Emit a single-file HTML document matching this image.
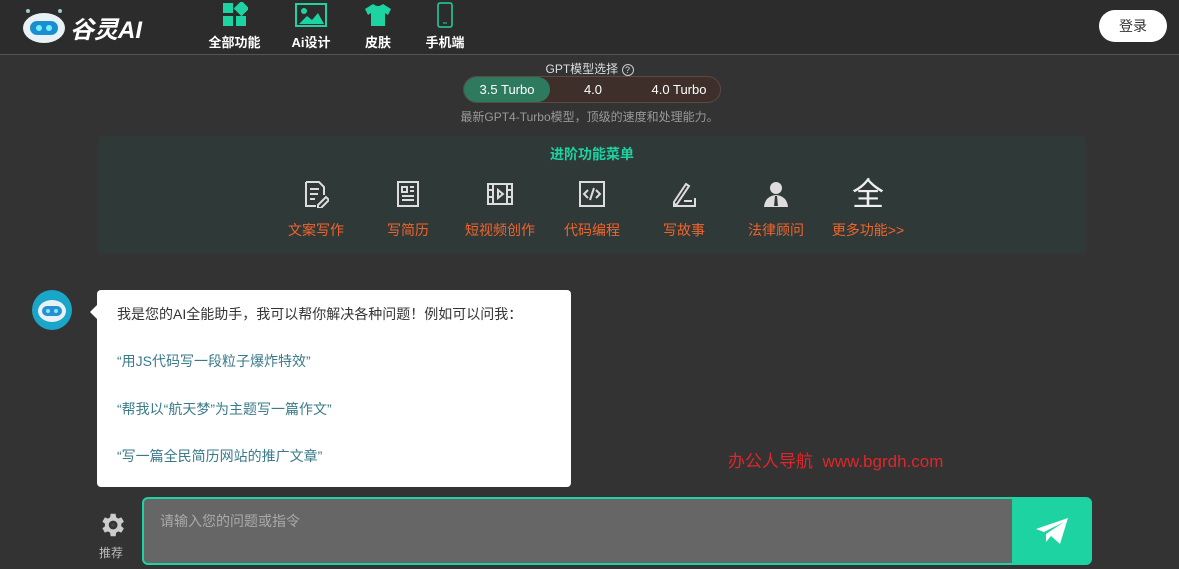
<!DOCTYPE html><html><head><meta charset="utf-8"><style>
*{margin:0;padding:0;box-sizing:border-box}
body{width:1179px;height:569px;background:#333;font-family:"Liberation Sans","Noto Sans CJK SC",sans-serif;position:relative;overflow:hidden;color:#eee}
.hdr{position:absolute;left:0;top:0;width:1179px;height:55px;background:#2c2c2c;border-bottom:1px solid #555}
.nav{position:absolute;top:2px;text-align:center;font-size:13px;font-weight:bold;color:#fff}
.nav svg{display:block;margin:0 auto 4px}
.abs{position:absolute}
.panel{position:absolute;left:98px;top:136px;width:988px;height:118px;background:#2f3938;border-radius:4px}
.it{position:absolute;top:44px;width:90px;text-align:center;color:#f0642c;font-size:14px}
.it svg{display:block;margin:0 auto 12px}
.bub{position:absolute;left:97px;top:290px;width:474px;height:197px;background:#fff;border-radius:4px;color:#333;font-size:14px}
.bub p{position:absolute;left:20px}
.q{color:#3a7a8a}
</style></head><body>
<div class="hdr"></div>
<svg class="abs" style="left:22px;top:7px" width="44" height="38" viewBox="0 0 44 38"><circle cx="6" cy="4" r="2" fill="#9cc"/><circle cx="38" cy="4" r="2" fill="#9cc"/><ellipse cx="22" cy="21" rx="21" ry="15" fill="#e8f1f5"/><rect x="8" y="14" width="28" height="14" rx="7" fill="#1a8fd0"/><circle cx="17" cy="21" r="3" fill="#7ef"/><circle cx="27" cy="21" r="3" fill="#7ef"/></svg>
<div class="abs" style="left:70px;top:10px;font-size:24px;font-weight:bold;font-style:italic;color:#fff">谷灵AI</div>
<div class="nav" style="left:207px;width:55px"><svg width="26" height="26"><rect x="1" y="1" width="10" height="10" fill="#1ed3a2"/><rect x="14" y="1" width="11" height="11" fill="#1ed3a2" transform="rotate(45 19.5 6.5)"/><rect x="1" y="14" width="10" height="10" fill="#1ed3a2"/><rect x="14" y="14" width="10" height="10" fill="#1ed3a2"/></svg>全部功能</div>
<div class="nav" style="left:290px;width:42px"><svg width="32" height="26"><rect x="1" y="2" width="30" height="22" fill="none" stroke="#1ed3a2" stroke-width="2"/><circle cx="9" cy="9" r="3" fill="#1ed3a2"/><path d="M4 22 L12 14 L17 18 L23 11 L29 22Z" fill="#1ed3a2"/></svg>Ai设计</div>
<div class="nav" style="left:363px;width:30px"><svg width="28" height="26"><path d="M9 2 L1 7 L4 13 L7 11 L7 24 L21 24 L21 11 L24 13 L27 7 L19 2 Q14 6 9 2Z" fill="#1ed3a2"/></svg>皮肤</div>
<div class="nav" style="left:424px;width:42px"><svg width="18" height="26"><rect x="2" y="1" width="14" height="24" rx="2" fill="none" stroke="#1ed3a2" stroke-width="1.5"/><line x1="7" y1="21" x2="11" y2="21" stroke="#1ed3a2"/></svg>手机端</div>
<div class="abs" style="left:1099px;top:10px;width:68px;height:32px;border-radius:16px;background:#fff;color:#333;font-size:14px;text-align:center;line-height:32px">登录</div>
<div class="abs" style="left:0;width:1179px;top:60px;text-align:center;font-size:12px;color:#ddd">GPT模型选择 <span style="display:inline-block;width:12px;height:12px;border:1px solid #ccc;border-radius:50%;font-size:9px;line-height:10px">?</span></div>
<div class="abs" style="left:463px;top:76px;width:258px;height:27px;border-radius:14px;background:#3e2f2b;border:1px solid #5a4a45;font-size:13px;color:#fff">
<div class="abs" style="left:0;top:0;width:86px;height:25px;border-radius:13px;background:#2d7a5f;text-align:center;line-height:25px">3.5 Turbo</div>
<div class="abs" style="left:86px;width:86px;text-align:center;line-height:25px">4.0</div>
<div class="abs" style="left:172px;width:86px;text-align:center;line-height:25px">4.0 Turbo</div></div>
<div class="abs" style="left:0;width:1179px;top:108px;text-align:center;font-size:12px;color:#999">最新GPT4-Turbo模型，顶级的速度和处理能力。</div>
<div class="panel">
<div class="abs" style="left:0;width:988px;top:8px;text-align:center;color:#1ed3a2;font-size:14px;font-weight:bold">进阶功能菜单</div>
<div class="it" style="left:173px"><svg width="26" height="28" fill="none" stroke="#ddd" stroke-width="2"><path d="M3 2h13l5 5v8M3 2v24h10M7 9h9M7 14h8M7 19h5M15 25l8-8 3 3-8 8h-3z"/></svg>文案写作</div>
<div class="it" style="left:265px"><svg width="24" height="28" fill="none" stroke="#ddd" stroke-width="2"><rect x="2" y="2" width="20" height="24"/><path d="M6 7h5v5H6zM14 7h4M14 11h4M6 16h12M6 20h12"/></svg>写简历</div>
<div class="it" style="left:357px"><svg width="28" height="28" fill="none" stroke="#ddd" stroke-width="2"><rect x="2" y="4" width="24" height="20"/><path d="M7 4v20M21 4v20M2 10h5M2 17h5M21 10h5M21 17h5M12 10l5 4-5 4z"/></svg>短视频创作</div>
<div class="it" style="left:449px"><svg width="28" height="28" fill="none" stroke="#ddd" stroke-width="2"><rect x="2" y="2" width="24" height="24"/><path d="M10 10l-4 4 4 4M18 10l4 4-4 4M16 8l-4 12"/></svg>代码编程</div>
<div class="it" style="left:541px"><svg width="28" height="28" fill="none" stroke="#ddd" stroke-width="2"><path d="M4 22l12-18 3 2-12 18-3 1zM3 26h22v-8M14 21h8"/></svg>写故事</div>
<div class="it" style="left:633px"><svg width="28" height="28"><circle cx="14" cy="8" r="6" fill="#ddd"/><path d="M2 27q1-11 12-12q11 1 12 12z" fill="#ddd"/><path d="M13 16h2l1 10h-4z" fill="#2f3938"/></svg>法律顾问</div>
<div class="it" style="left:725px"><div style="font-size:32px;color:#eee;height:28px;line-height:28px;margin-bottom:12px">全</div>更多功能&gt;&gt;</div>
</div>
<svg class="abs" style="left:32px;top:290px" width="40" height="40"><circle cx="20" cy="20" r="20" fill="#1aa6c8"/><ellipse cx="20" cy="21" rx="14" ry="11" fill="#e8f1f5"/><rect x="10" y="16" width="20" height="10" rx="5" fill="#2a8fcf"/><circle cx="16" cy="21" r="2" fill="#7ef"/><circle cx="24" cy="21" r="2" fill="#7ef"/></svg>
<div class="abs" style="left:90px;top:305px;width:0;height:0;border:7px solid transparent;border-right-color:#fff;border-left:0"></div>
<div class="bub">
<p style="top:14px">我是您的AI全能助手，我可以帮你解决各种问题！例如可以问我：</p>
<p class="q" style="top:61px">“用JS代码写一段粒子爆炸特效”</p>
<p class="q" style="top:109px">“帮我以“航天梦”为主题写一篇作文”</p>
<p class="q" style="top:156px">“写一篇全民简历网站的推广文章”</p>
</div>
<div class="abs" style="left:728px;top:447px;color:#e0262a;font-size:17px">办公人导航&nbsp; www.bgrdh.com</div>
<svg class="abs" style="left:97px;top:510px" width="30" height="30" viewBox="0 0 24 24"><path fill="#ccc" d="M19.4 13a7.5 7.5 0 000-2l2.1-1.6-2-3.5-2.5 1a7.6 7.6 0 00-1.7-1L14.9 3h-4l-.4 2.9a7.6 7.6 0 00-1.7 1l-2.5-1-2 3.5L6.4 11a7.5 7.5 0 000 2l-2.1 1.6 2 3.5 2.5-1a7.6 7.6 0 001.7 1l.4 2.9h4l.4-2.9a7.6 7.6 0 001.7-1l2.5 1 2-3.5zM12.9 15.5a3.5 3.5 0 110-7 3.5 3.5 0 010 7z"/><circle cx="12.9" cy="12" r="1.7" fill="#444"/></svg>
<div class="abs" style="left:99px;top:544px;font-size:12px;color:#bbb">推荐</div>
<div class="abs" style="left:142px;top:497px;width:950px;height:68px;border:2px solid #1ed3a2;border-radius:6px;background:#1ed3a2;overflow:hidden">
<div class="abs" style="left:0;top:0;width:868px;height:64px;background:#666;color:#aaa;font-size:14px;padding:12px 16px">请输入您的问题或指令</div>
<svg class="abs" style="left:890px;top:17px" width="36" height="30" viewBox="0 0 36 30"><path d="M2 13 L34 2 L26 28 L17 20 L12 26 L12 18 L30 6 L10 16Z" fill="#fff"/></svg>
</div>
</body></html>
